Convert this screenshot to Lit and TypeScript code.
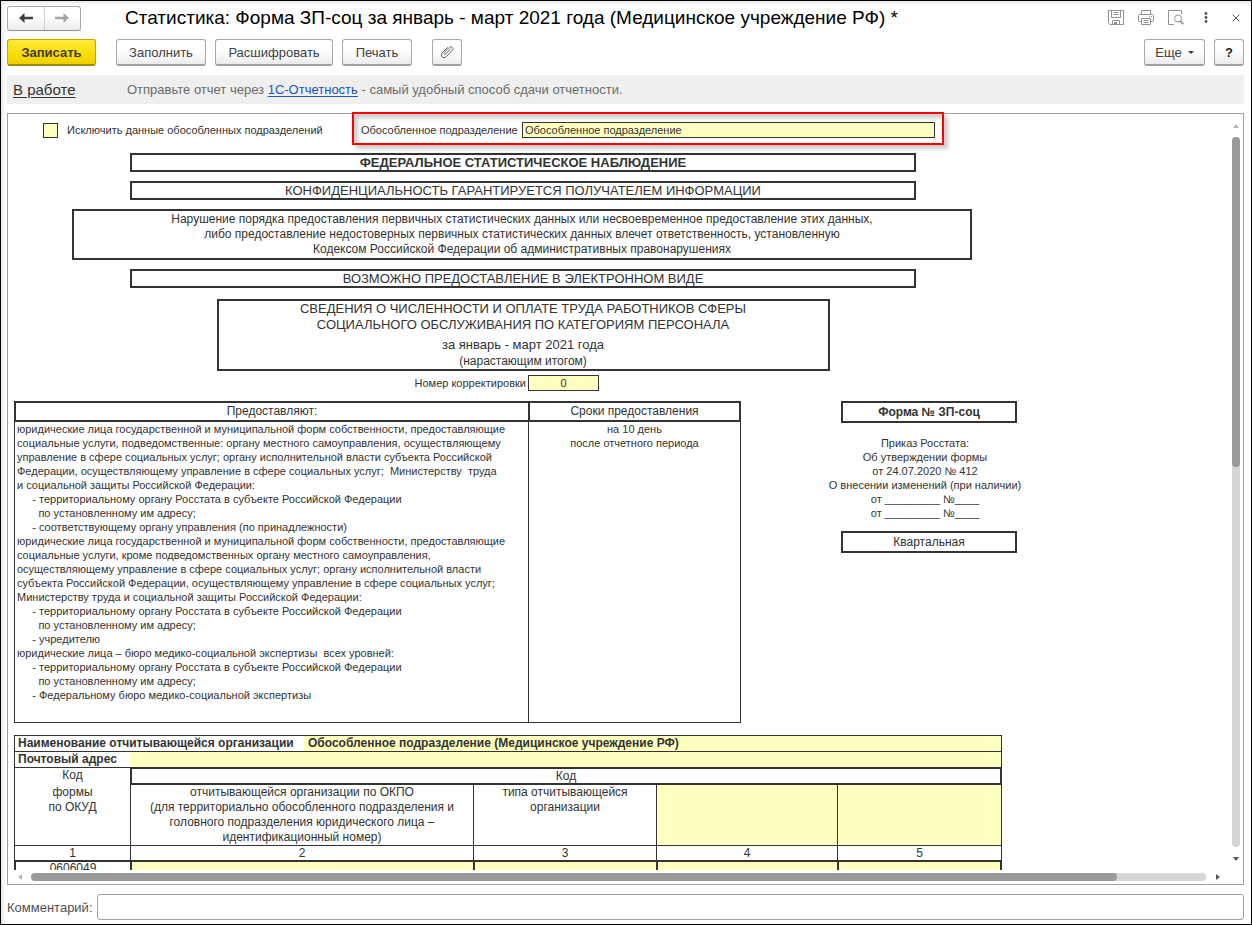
import { LitElement, html, css, svg } from "lit";
import { customElement } from "lit/decorators.js";

const PROVIDERS: string[] = [
  "юридические лица государственной и муниципальной форм собственности, предоставляющие",
  "социальные услуги, подведомственные: органу местного самоуправления, осуществляющему",
  "управление в сфере социальных услуг; органу исполнительной власти субъекта Российской",
  "Федерации, осуществляющему управление в сфере социальных услуг;  Министерству  труда",
  "и социальной защиты Российской Федерации:",
  "     - территориальному органу Росстата в субъекте Российской Федерации",
  "       по установленному им адресу;",
  "     - соответствующему органу управления (по принадлежности)",
  "юридические лица государственной и муниципальной форм собственности, предоставляющие",
  "социальные услуги, кроме подведомственных органу местного самоуправления,",
  "осуществляющему управление в сфере социальных услуг; органу исполнительной власти",
  "субъекта Российской Федерации, осуществляющему управление в сфере социальных услуг;",
  "Министерству труда и социальной защиты Российской Федерации:",
  "     - территориальному органу Росстата в субъекте Российской Федерации",
  "       по установленному им адресу;",
  "     - учредителю",
  "юридические лица – бюро медико-социальной экспертизы  всех уровней:",
  "     - территориальному органу Росстата в субъекте Российской Федерации",
  "       по установленному им адресу;",
  "     - Федеральному бюро медико-социальной экспертизы",
];

const ORDER: string[] = [
  "Приказ Росстата:",
  "Об утверждении формы",
  "от 24.07.2020 № 412",
  "О внесении изменений (при наличии)",
  "от _________ №____",
  "от _________ №____",
];

const lines = (items: string[]) => items.map((t) => html`<div class="line">${t}</div>`);

const arrow = (points: string) => html`<svg width="6" height="6" viewBox="0 0 6 6" aria-hidden="true">${svg`<polygon points=${points} fill="currentColor"></polygon>`}</svg>`;

@customElement("report-header")
class ReportHeader extends LitElement {
  static styles = css`
    :host { display: block; }
    .title-row { display: flex; align-items: center; height: 26px; }
    .nav { display: flex; width: 74px; height: 25px; box-sizing: border-box; border: 1px solid #a9a9a9; border-bottom-color: #8f8f8f; border-radius: 3px; background: linear-gradient(#fff 40%, #ececec); margin-right: 44px; }
    .nav button { flex: 1; display: grid; place-items: center; border: 0; padding: 0; background: none; color: #404040; }
    .nav .forward { color: #a6a6a6; border-left: 1px solid #d0d0d0; }
    h1 { flex: 1; margin: 0; font-size: 19px; line-height: 24px; font-weight: 400; color: #000; white-space: nowrap; }
    .tools { display: flex; gap: 14px; }
    .tools button { width: 16px; height: 18px; display: grid; place-items: center; border: 0; padding: 0; background: none; color: #919191; }
    .tools .dark { color: #505050; }
    .bar { display: flex; align-items: center; gap: 9px; margin-top: 8px; }
    .bar button { height: 27px; box-sizing: border-box; border: 1px solid #a9a9a9; border-bottom: 2px solid #a0a0a0; border-radius: 3px; background: linear-gradient(#fff 45%, #ebebeb); font: 13px "Liberation Sans", Arial, sans-serif; color: #404040; padding: 0; display: flex; align-items: center; justify-content: center; white-space: nowrap; }
    .bar .primary { width: 89px; font-weight: 700; border-color: #c3a600; border-bottom-color: #a18a00; background: linear-gradient(#ffea3a, #fbdc00 60%, #efd000); margin-right: 11px; }
    .bar .fill { width: 90px; }
    .bar .decode { width: 118px; }
    .bar .print { width: 70px; }
    .bar .clip { width: 30px; margin-left: 11px; }
    .bar .more { width: 61px; gap: 6px; margin-left: auto; }
    .bar .help { width: 30px; font-weight: 700; color: #222; }
    .status { display: flex; align-items: center; height: 29px; margin-top: 9px; background: #efefef; padding: 0 6px; color: #6b6b6b; font-size: 13px; }
    .state { width: 114px; font-size: 15px; color: #333; text-decoration: underline; text-underline-offset: 2px; }
    .status a { color: #1a55bb; text-underline-offset: 2px; }
    .status p { margin: 0; }
  `;

  render() {
    return html`
      <div class="title-row">
        <div class="nav">
          <button type="button" aria-label="Назад">
            <svg width="16" height="12" viewBox="0 0 16 12"><path d="M1 6 6.500 1v3.700H15v2.600H6.500V11z" fill="currentColor" /></svg>
          </button>
          <button type="button" class="forward" aria-label="Вперед">
            <svg width="16" height="12" viewBox="0 0 16 12"><path d="M15 6 9.500 1v3.700H1v2.600h8.500V11z" fill="currentColor" /></svg>
          </button>
        </div>
        <h1>Статистика: Форма ЗП-соц за январь - март 2021 года (Медицинское учреждение РФ) *</h1>
        <div class="tools">
          <button type="button" aria-label="Сохранить">
            <svg width="16" height="16" viewBox="0 0 16 16" fill="none" stroke="currentColor"><path d="M.5.500h15v14h-13.500l-1.500-1.500zM3.500.5v7h9v-7M5.500 2.500h5M5.500 4.500h5M4.500 14.500v-4h7v4" /><path d="M6 12h3v2H6z" fill="currentColor" stroke="none" /></svg>
          </button>
          <button type="button" aria-label="Печать документа">
            <svg width="16" height="16" viewBox="0 0 16 16" fill="none" stroke="currentColor"><path d="M3.500 4.500v-4h9v4M3.500 11.500H1.500a1 1 0 0 1-1-1v-5a1 1 0 0 1 1-1h13a1 1 0 0 1 1 1v5a1 1 0 0 1-1 1h-2M3.500 8.500h9v6h-9zM5.500 10.500h5M5.500 12.500h5M11 6.500h1M13 6.500h1" /></svg>
          </button>
          <button type="button" aria-label="Просмотр">
            <svg width="16" height="16" viewBox="0 0 16 16" fill="none" stroke="currentColor"><path d="M6 14.500H.5V.5h13v4" /><circle cx="10" cy="8.500" r="3.500" /><path d="m12.300 11 3 3.200" stroke-width="1.800" /></svg>
          </button>
          <button type="button" class="dark" aria-label="Меню">
            <svg width="4" height="14" viewBox="0 0 4 14" fill="currentColor"><circle cx="2" cy="2.500" r="1.400" /><circle cx="2" cy="6.500" r="1.400" /><circle cx="2" cy="10.500" r="1.400" /></svg>
          </button>
          <button type="button" class="dark" aria-label="Закрыть">
            <svg width="8" height="8" viewBox="0 0 8 8" stroke="currentColor"><path d="m.7.7 6.600 6.600M7.300.7.7 7.300" /></svg>
          </button>
        </div>
      </div>
      <div class="bar">
        <button type="button" class="primary">Записать</button>
        <button type="button" class="fill">Заполнить</button>
        <button type="button" class="decode">Расшифровать</button>
        <button type="button" class="print">Печать</button>
        <button type="button" class="clip" aria-label="Прикрепленные файлы">
          <svg width="14" height="14" viewBox="0 0 14 14" fill="none" stroke="#666" stroke-linecap="round"><path d="M10.500 4 5.700 9c-1 1-2.400-.3-1.400-1.400l5-5.200c2-2 5 .8 3 3l-6 6.200c-3 2.800-6.700-.8-4-3.800L7.500 2.500" /></svg>
        </button>
        <button type="button" class="more">Еще <svg width="6" height="3" viewBox="0 0 6 3"><path d="M0 0h6L3 3z" fill="#404040" /></svg></button>
        <button type="button" class="help">?</button>
      </div>
      <div class="status">
        <span class="state">В работе</span>
        <p>Отправьте отчет через <a href="#">1С-Отчетность</a> - самый удобный способ сдачи отчетности.</p>
      </div>
    `;
  }
}

@customElement("report-sheet")
class ReportSheet extends LitElement {
  static styles = css`
    :host { display: block; color: #333; font-size: 12px; }
    input { font: inherit; color: inherit; border-radius: 0; box-sizing: border-box; margin: 0; }
    .sheet { padding: 8px 6px 0; width: max-content; }
    .options { display: flex; align-items: center; height: 16px; font-size: 11px; margin-left: 29px; }
    .tick { appearance: none; width: 15px; height: 15px; border: 1px solid #333; background: #ffffc0; margin-right: 9px; }
    .exclude { width: 294px; }
    .unit { width: 161px; }
    .unit-field { width: 413px; height: 16px; border: 1px solid #333; background: #ffffc0; padding: 0 2px; }
    .head { display: flex; flex-direction: column; align-items: center; width: 902px; margin: 15px 0 0 58px; text-align: center; }
    .box { box-sizing: border-box; border: 2px solid #333; }
    .wide { width: 786px; font-size: 13px; line-height: 15px; margin-bottom: 9px; }
    .strong { font-weight: 700; }
    .warning { width: 900px; align-self: start; line-height: 15px; padding: 1px 0; margin-bottom: 9px; }
    .subject { width: 613px; font-size: 13px; line-height: 16px; height: 72px; margin-top: 2px; }
    .period { padding-top: 4px; }
    .growing { font-size: 12px; }
    .correction { display: grid; grid-template-columns: 454px 71px; gap: 2px; align-items: center; align-self: start; height: 16px; margin-top: 4px; font-size: 11px; }
    .correction label { text-align: right; }
    .correction input { height: 16px; width: 71px; border: 1px solid #333; background: #ffffc0; text-align: center; padding: 0; }
    .columns { display: flex; align-items: flex-start; margin-top: 10px; }
    table { border-spacing: 0; table-layout: fixed; }
    th, td { padding: 0; box-sizing: border-box; }
    .terms { width: 727px; }
    .terms .who { width: 514px; }
    .terms th { height: 21px; border: 2px solid #333; border-right-width: 0; font-weight: 400; font-size: 12px; line-height: 17px; }
    .terms th:last-child { border-right-width: 2px; }
    .terms td { height: 301px; vertical-align: top; border: 1px solid #333; border-width: 0 0 1px 1px; font-size: 11px; }
    .terms td:first-child { padding-left: 2px; }
    .terms td:last-child { border-right-width: 1px; text-align: center; }
    .line { line-height: 14px; white-space: pre; }
    .form { display: flex; flex-direction: column; align-items: center; width: 200px; margin-left: 88px; text-align: center; font-size: 11px; }
    .form .box { width: 176px; font-size: 12px; line-height: 18px; }
    .form .code { font-weight: 700; }
    .order { padding: 13px 8px 11px 0; }
    .org { width: 988px; margin-top: 12px; line-height: 15px; text-align: center; }
    .org th, .org td { border: 0 solid #333; border-top-width: 1px; font-weight: 400; vertical-align: top; }
    .org th { border-left-width: 1px; }
    .org tr > :last-child { border-right-width: 1px; }
    .org .caption { text-align: left; font-weight: 700; padding-left: 3px; }
    .org td { background: #ffffc0; }
    .org td input { display: block; width: 100%; height: 15px; border: 0; background: none; padding: 0 4px; font-weight: 700; }
    .org .group > .heavy { border-width: 2px; line-height: 14px; height: 18px; }
    .org .group > :first-child { border-right-width: 0; }
    .org .names > * { height: 59px; border-top-width: 0; }
    .org .names > td { border-left-width: 1px; }
    .org .numbers > * { line-height: 14px; }
    .org .data > * { border-width: 2px 0 0 2px; line-height: 13px; }
    .org .data > :last-child { border-right-width: 2px; }
  `;

  render() {
    return html`
      <div class="sheet">
        <div class="options">
          <input class="tick" type="checkbox" id="exclude" />
          <label class="exclude" for="exclude">Исключить данные обособленных подразделений</label>
          <label class="unit" for="unit">Обособленное подразделение</label>
          <input class="unit-field" id="unit" type="text" value="Обособленное подразделение" />
        </div>
        <div class="head">
          <div class="box wide strong">ФЕДЕРАЛЬНОЕ СТАТИСТИЧЕСКОЕ НАБЛЮДЕНИЕ</div>
          <div class="box wide">КОНФИДЕНЦИАЛЬНОСТЬ ГАРАНТИРУЕТСЯ ПОЛУЧАТЕЛЕМ ИНФОРМАЦИИ</div>
          <div class="box warning">
            Нарушение порядка предоставления первичных статистических данных или несвоевременное предоставление этих данных,<br />
            либо предоставление недостоверных первичных статистических данных влечет ответственность, установленную<br />
            Кодексом Российской Федерации об административных правонарушениях
          </div>
          <div class="box wide">ВОЗМОЖНО ПРЕДОСТАВЛЕНИЕ В ЭЛЕКТРОННОМ ВИДЕ</div>
          <div class="box subject">
            <div>СВЕДЕНИЯ О ЧИСЛЕННОСТИ И ОПЛАТЕ ТРУДА РАБОТНИКОВ СФЕРЫ</div>
            <div>СОЦИАЛЬНОГО ОБСЛУЖИВАНИЯ ПО КАТЕГОРИЯМ ПЕРСОНАЛА</div>
            <div class="period">за январь - март 2021 года</div>
            <div class="growing">(нарастающим итогом)</div>
          </div>
          <div class="correction">
            <label for="correction">Номер корректировки</label>
            <input id="correction" type="text" value="0" />
          </div>
        </div>
        <div class="columns">
          <table class="terms">
            <colgroup><col class="who" /><col /></colgroup>
            <thead><tr><th>Предоставляют:</th><th>Сроки предоставления</th></tr></thead>
            <tbody><tr><td>${lines(PROVIDERS)}</td><td>${lines(["на 10 день", "после отчетного периода"])}</td></tr></tbody>
          </table>
          <div class="form">
            <div class="box code">Форма № ЗП-соц</div>
            <div class="order">${lines(ORDER)}</div>
            <div class="box">Квартальная</div>
          </div>
        </div>
        <table class="org">
          <colgroup><col width="116" /><col width="174" /><col width="169" /><col width="183" /><col width="181" /><col width="165" /></colgroup>
          <tbody>
            <tr>
              <th class="caption" colspan="2"><label for="org">Наименование отчитывающейся организации</label></th>
              <td colspan="4"><input id="org" type="text" value="Обособленное подразделение (Медицинское учреждение РФ)" /></td>
            </tr>
            <tr>
              <th class="caption"><label for="address">Почтовый адрес</label></th>
              <td colspan="5"><input id="address" type="text" /></td>
            </tr>
            <tr class="group"><th>Код</th><th class="heavy" colspan="5">Код</th></tr>
            <tr class="names">
              <th>формы<br />по ОКУД</th>
              <th colspan="2">отчитывающейся организации по ОКПО<br />(для территориально обособленного подразделения и<br />головного подразделения юридического лица –<br />идентификационный номер)</th>
              <th>типа отчитывающейся<br />организации</th>
              <td></td>
              <td></td>
            </tr>
            <tr class="numbers"><th>1</th><th colspan="2">2</th><th>3</th><th>4</th><th>5</th></tr>
            <tr class="data">
              <th>0606049</th>
              <td colspan="2"><input type="text" aria-label="ОКПО" /></td>
              <td><input type="text" aria-label="Тип организации" /></td>
              <td><input type="text" aria-label="Графа 4" /></td>
              <td><input type="text" aria-label="Графа 5" /></td>
            </tr>
          </tbody>
        </table>
      </div>
    `;
  }
}

@customElement("app-root")
class AppRoot extends LitElement {
  static styles = css`
    :host { display: flex; flex-direction: column; box-sizing: border-box; height: 100vh; min-height: 400px; padding: 4px 7px 4px 6px; border: 1px solid #000; background: #fff; box-shadow: inset 4px 4px 4px -2px #e8e4e5; font-family: "Liberation Sans", Arial, sans-serif; }
    .frame { position: relative; flex: 1; min-height: 0; display: grid; grid-template: minmax(0, 1fr) 14px / minmax(0, 1fr) 14px; margin-top: 9px; border: 1px solid #a0a0a0; background: #fff; }
    .view { overflow: hidden; }
    .mark { position: absolute; left: 344px; top: -2px; width: 592px; height: 33px; box-sizing: border-box; border: 2px solid #f00; box-shadow: 4px 4px 4px rgba(0, 0, 0, 0.2), inset 4px 4px 4px rgba(0, 0, 0, 0.2); pointer-events: none; }
    .scroll { display: flex; align-items: center; color: #555; }
    .scroll button { display: grid; place-items: center; border: 0; padding: 0; background: none; color: inherit; }
    .scroll .idle { color: #b5b5b5; }
    .vertical { flex-direction: column; }
    .vertical button { width: 14px; height: 23px; }
    .horizontal button { width: 23px; height: 14px; }
    .track { flex: 1; background: #d6d6d6; border-radius: 4px; }
    .vertical .track { width: 8px; }
    .horizontal .track { height: 8px; }
    .thumb { background: #999; border-radius: 4px; }
    .vertical .thumb { height: 46.500%; }
    .horizontal .thumb { height: 8px; width: 92.400%; }
    .comment { display: flex; align-items: center; gap: 4px; margin-top: 9px; font-size: 13px; color: #505050; }
    .comment input { flex: 1; height: 26px; box-sizing: border-box; border: 1px solid #a0a0a0; border-radius: 3px; background: #fff; font: inherit; padding: 0 6px; }
  `;

  render() {
    return html`
      <report-header></report-header>
      <div class="frame">
        <div class="view"><report-sheet></report-sheet></div>
        <div class="scroll vertical">
          <button type="button" class="idle" aria-label="Вверх">${arrow("0,5 3,1 6,5")}</button>
          <div class="track"><div class="thumb"></div></div>
          <button type="button" aria-label="Вниз">${arrow("0,1 6,1 3,5")}</button>
        </div>
        <div class="scroll horizontal">
          <button type="button" class="idle" aria-label="Влево">${arrow("5,0 5,6 1,3")}</button>
          <div class="track"><div class="thumb"></div></div>
          <button type="button" aria-label="Вправо">${arrow("1,0 5,3 1,6")}</button>
        </div>
        <div class="mark"></div>
      </div>
      <div class="comment">
        <label for="comment">Комментарий:</label>
        <input id="comment" type="text" />
      </div>
    `;
  }
}
